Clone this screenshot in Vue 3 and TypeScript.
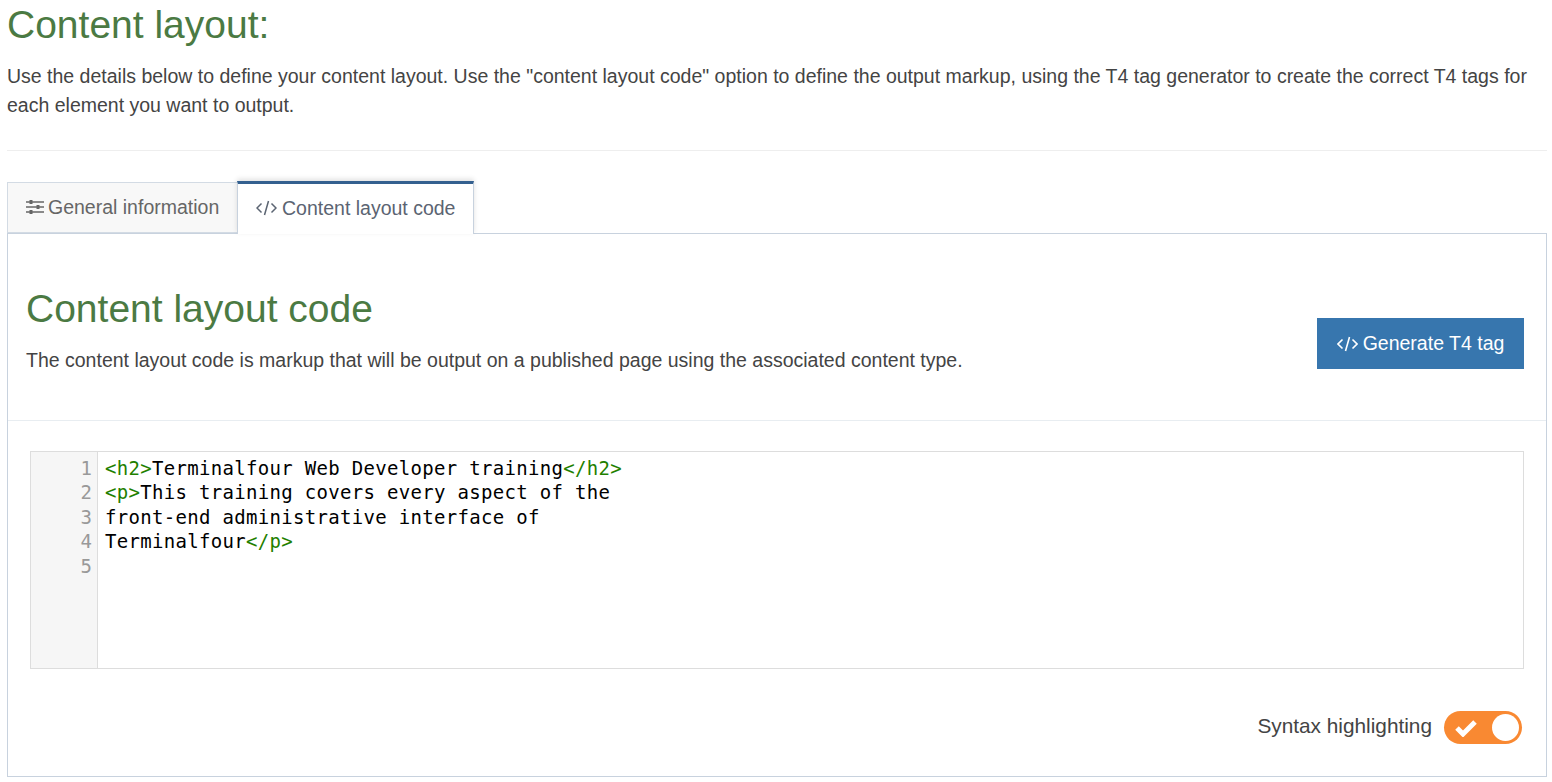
<script setup lang="ts">
const codeLines: { text: string; kind: string }[][] = [
  [{ text: '<h2>', kind: 'tag' }, { text: 'Terminalfour Web Developer training', kind: 'txt' }, { text: '</h2>', kind: 'tag' }],
  [{ text: '<p>', kind: 'tag' }, { text: 'This training covers every aspect of the', kind: 'txt' }],
  [{ text: 'front-end administrative interface of', kind: 'txt' }],
  [{ text: 'Terminalfour', kind: 'txt' }, { text: '</p>', kind: 'tag' }],
  [],
]
</script>

<template>
  <div class="page">
    <h1 class="title">Content layout:</h1>
    <p class="intro">Use the details below to define your content layout. Use the "content layout code" option to define the output markup, using the T4 tag generator to create the correct T4 tags for each element you want to output.</p>
    <hr class="rule" />
    <div class="tabs">
      <div class="tab inactive">
        <svg class="ico" width="18" height="16" viewBox="0 0 18 16" fill="none" stroke="currentColor">
          <path d="M0 3h18M0 8h18M0 13h18" stroke-width="1.4" />
          <rect x="3.500" y="1" width="3" height="4" fill="currentColor" stroke="none" />
          <rect x="10.500" y="6" width="3" height="4" fill="currentColor" stroke="none" />
          <rect x="3.500" y="11" width="3" height="4" fill="currentColor" stroke="none" />
        </svg>
        <span>General information</span>
      </div>
      <div class="tab active">
        <svg class="ico" width="21" height="16" viewBox="0 0 21 16" fill="none" stroke="currentColor" stroke-width="1.5">
          <path d="M5.500 3.500 1 8l4.500 4.500M15.500 3.500 20 8l-4.500 4.500M12.500 1 8.500 15" />
        </svg>
        <span>Content layout code</span>
      </div>
    </div>
    <section class="panel">
      <header class="panel-head">
        <div>
          <h2 class="subtitle">Content layout code</h2>
          <p class="desc">The content layout code is markup that will be output on a published page using the associated content type.</p>
        </div>
        <button class="gen" type="button">
          <svg width="21" height="16" viewBox="0 0 21 16" fill="none" stroke="currentColor" stroke-width="1.600">
            <path d="M5.500 3.500 1 8l4.500 4.500M15.500 3.500 20 8l-4.500 4.500M12.500 1 8.500 15" />
          </svg>
          <span>Generate T4 tag</span>
        </button>
      </header>
      <div class="panel-body">
        <div class="editor">
          <div class="gutter">
            <div v-for="(_, i) in codeLines" :key="i" class="num">{{ i + 1 }}</div>
          </div>
          <div class="code">
            <div v-for="(line, i) in codeLines" :key="i" class="line"><span v-for="(s, j) in line" :key="j" :class="s.kind">{{ s.text }}</span></div>
          </div>
        </div>
        <div class="syntax">
          <span class="syntax-label">Syntax highlighting</span>
          <div class="toggle">
            <svg width="24" height="18" viewBox="0 0 24 18" fill="none" stroke="#fff" stroke-width="5">
              <path d="M3 9l6 6L21 3" />
            </svg>
            <span class="knob"></span>
          </div>
        </div>
      </div>
    </section>
  </div>
</template>

<style scoped>
.page {
  box-sizing: border-box;
  width: 1552px;
  height: 782px;
  overflow: hidden;
  padding: 0 5px 0 7px;
  font-family: "Liberation Sans", Arial, sans-serif;
  color: #444;
}
.title {
  margin: 0;
  padding-top: 3px;
  height: 47px;
  box-sizing: border-box;
  font-size: 39px;
  line-height: 44px;
  font-weight: 400;
  color: #4b7a43;
}
.intro {
  margin: 15px 0 0;
  font-size: 19.500px;
  line-height: 29px;
  color: #444;
}
.rule {
  margin: 30px 0 0;
  border: 0;
  border-top: 1px solid #eee;
}
.tabs {
  display: flex;
  align-items: flex-end;
  margin-top: 30px;
  height: 52px;
  position: relative;
  z-index: 1;
}
.tab {
  box-sizing: border-box;
  display: flex;
  align-items: center;
  font-size: 19.500px;
}
.inactive {
  width: 230px;
  height: 51px;
  gap: 4px;
  padding: 0 0 1px 18px;
  background: #f8f8f8;
  border: 1px solid #d3dbe4;
  border-right: 0;
  color: #666;
}
.active {
  width: 237px;
  height: 53px;
  gap: 5px;
  padding: 0 0 2px 18px;
  background: #fff;
  border: 1px solid #c8d2de;
  border-top: 3px solid #34608f;
  border-bottom: 0;
  color: #5b6472;
  box-shadow: 0 -2px 5px rgba(0, 0, 0, 0.12);
  margin-bottom: -1px;
}
.panel {
  box-sizing: border-box;
  height: 544px;
  border: 1px solid #c8d2de;
}
.panel-head {
  box-sizing: border-box;
  height: 187px;
  border-bottom: 1px solid #e8edf1;
  display: flex;
  align-items: flex-start;
  justify-content: space-between;
  padding: 51px 22px 0 18px;
}
.subtitle {
  margin: 0;
  font-size: 39px;
  line-height: 48px;
  font-weight: 400;
  color: #4b7a43;
}
.desc {
  margin: 13px 0 0;
  font-size: 19.500px;
  line-height: 29px;
  color: #444;
}
.gen {
  box-sizing: border-box;
  width: 207px;
  height: 51px;
  margin-top: 33px;
  display: flex;
  align-items: center;
  justify-content: center;
  gap: 5px;
  border: 0;
  background: #3776ae;
  color: #fff;
  font-family: inherit;
  font-size: 19.500px;
}
.panel-body {
  padding: 30px 22px 0 22px;
}
.editor {
  box-sizing: border-box;
  height: 218px;
  border: 1px solid #ddd;
  display: flex;
  font-family: "DejaVu Sans Mono", monospace;
  font-size: 19px;
  line-height: 24.400px;
}
.gutter {
  box-sizing: border-box;
  width: 67px;
  padding: 4px 5px 0 0;
  background: #f6f6f6;
  border-right: 1px solid #ddd;
  text-align: right;
  color: #999;
}
.code {
  padding: 4px 0 0 7px;
  color: #000;
  letter-spacing: 0.310px;
}
.line {
  height: 24.400px;
  white-space: pre;
}
.tag {
  color: #1f8000;
}
.syntax {
  display: flex;
  justify-content: flex-end;
  align-items: center;
  gap: 12px;
  margin-top: 42px;
  padding-right: 2px;
}
.syntax-label {
  font-size: 20.800px;
  color: #444;
  padding-bottom: 4px;
}
.toggle {
  box-sizing: border-box;
  width: 78px;
  height: 33px;
  border-radius: 17px;
  background: #f98932;
  display: flex;
  align-items: center;
  justify-content: space-between;
  padding: 0 3px 0 10px;
}
.knob {
  width: 27px;
  height: 27px;
  border-radius: 50%;
  background: #fff;
}
</style>
